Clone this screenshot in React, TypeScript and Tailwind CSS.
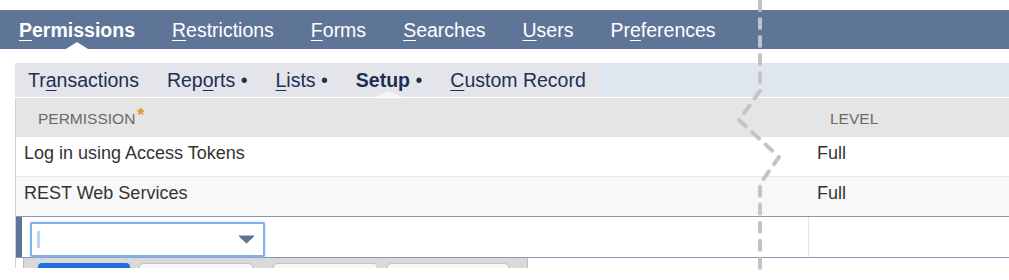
const mainTabs = [
  { key: 'P', rest: 'ermissions', active: true },
  { key: 'R', rest: 'estrictions' },
  { key: 'F', rest: 'orms' },
  { key: 'S', rest: 'earches' },
  { key: 'U', rest: 'sers' },
  { pre: 'Pr', key: 'e', rest: 'ferences' },
];

const subTabs = [
  { pre: 'Tr', key: 'a', rest: 'nsactions' },
  { pre: 'Rep', key: 'o', rest: 'rts', dot: true },
  { key: 'L', rest: 'ists', dot: true },
  { pre: 'Setup', dot: true, active: true },
  { key: 'C', rest: 'ustom Record' },
];

const rows = [
  { name: 'Log in using Access Tokens', level: 'Full', bg: 'bg-white' },
  { name: 'REST Web Services', level: 'Full', bg: 'bg-[#f8f8f8]' },
];

const App = () => {
  return (
    <div className="relative w-[1009px] h-[280px] overflow-hidden bg-white font-['Liberation_Sans',Arial,sans-serif]">
      <div className="h-[10px]" />

      {/* Main tabs */}
      <nav className="flex h-[39px] bg-[#5f7598] pl-[0.5px] text-[19.5px] text-white">
        {mainTabs.map((t, i) => (
          <div
            key={i}
            className={`relative flex items-center px-[18.5px] pt-[2px] ${t.active ? 'font-bold' : ''}`}
          >
            <span>
              {t.pre}
              <span className="underline underline-offset-[3px]">{t.key}</span>
              {t.rest}
            </span>
            {t.active && (
              <span className="absolute bottom-0 left-1/2 -translate-x-1/2 w-0 h-0 border-l-[11px] border-r-[11px] border-b-[7px] border-l-transparent border-r-transparent border-b-white" />
            )}
          </div>
        ))}
      </nav>

      <div className="h-[14px]" />

      {/* Sub tabs */}
      <div className="ml-[15px] flex h-[34px]">
        <div className="flex w-[585px] gap-[28px] bg-[#e3e5ea] pl-[13px] text-[19.5px] text-[#1e2e55]">
          {subTabs.map((t, i) => (
            <div
              key={i}
              className={`relative flex h-full items-center pt-[1px] ${t.active ? 'font-bold' : ''}`}
            >
              <span>
                {t.pre}
                {t.key && <span className="underline underline-offset-[3px]">{t.key}</span>}
                {t.rest}
                {t.dot && <span className="font-normal"> •</span>}
              </span>
              {t.active && (
                <span className="absolute bottom-0 left-1/2 -translate-x-1/2 w-0 h-0 border-l-[14px] border-r-[14px] border-b-[6px] border-l-transparent border-r-transparent border-b-[#f4f4f4]" />
              )}
            </div>
          ))}
        </div>
        <div className="flex-1 bg-[#e0e6ef]" />
      </div>

      {/* Table */}
      <div className="ml-[15px] mt-px border-l border-[#d2d2d2]">
        <div className="flex h-[39px] bg-[#e5e5e5] pt-[3px] text-[15.5px] text-[#6a6a6a]">
          <div className="flex w-[792px] items-center pl-[22px]">
            PERMISSION
            <span className="ml-[2px] -mt-[8px] text-[18px] font-bold text-[#d9992a]">*</span>
          </div>
          <div className="flex flex-1 items-center pl-[22px]">LEVEL</div>
        </div>

        {rows.map((r, i) => (
          <div
            key={i}
            className={`flex h-[40px] border-b border-[#e7e7e7] text-[18px] leading-[22px] text-[#333] ${r.bg}`}
          >
            <div className="w-[792px] pl-[8px] pt-[5px]">{r.name}</div>
            <div className="flex-1 pl-[9px] pt-[5px]">{r.level}</div>
          </div>
        ))}

        {/* Editing row */}
        <div className="-mt-px flex h-[42px] border-y border-[#8697b6] bg-white">
          <div className="flex w-[792px]">
            <div className="w-[6px] bg-[#5f7598]" />
            <div className="ml-[8px] pt-[5px]">
              <div className="flex h-[35px] w-[235px] items-center justify-between rounded-[2px] border-2 border-[#80b1ec] bg-white pl-[5px] pr-[8px] shadow-[0_0_2px_#a9cbf4]">
                <div className="h-[17px] w-[3px] bg-[#b9d5f7]" />
                <svg width="17" height="9" viewBox="0 0 17 9">
                  <path d="M1 1 L16 1 L8.5 8 Z" fill="#5f7598" stroke="#5f7598" strokeLinejoin="round" />
                </svg>
              </div>
            </div>
          </div>
          <div className="flex-1 border-l border-[#e4e4e4]" />
        </div>

        {/* Button strip (cut off) */}
        <div className="ml-[7px] flex h-[10px] w-[505px] gap-[9px] overflow-hidden border-x border-[#bdbdbd] bg-[#d9d9d9] pl-[14px] pt-[5px]">
          <div className="h-[20px] w-[92px] shrink-0 rounded-t-[4px] bg-[#1d6fde]" />
          <div className="h-[20px] w-[114px] shrink-0 rounded-t-[4px] border border-[#c4c4c4] bg-[#f7f7f7]" />
          <div className="ml-[11px] h-[20px] w-[105px] shrink-0 rounded-t-[4px] border border-[#c4c4c4] bg-[#f7f7f7]" />
          <div className="h-[20px] w-[122px] shrink-0 rounded-t-[4px] border border-[#c4c4c4] bg-[#f7f7f7]" />
        </div>
      </div>

      {/* Dashed annotation line */}
      <svg className="pointer-events-none absolute inset-0" width="1009" height="280">
        <path
          d="M760 1 L760 91 L739 120 L779 157 L760 184 L760 271"
          fill="none"
          stroke="#c4c4c4"
          strokeWidth="4"
          strokeDasharray="9 9"
          strokeLinecap="round"
          strokeLinejoin="round"
        />
      </svg>
    </div>
  );
};

export default App;
